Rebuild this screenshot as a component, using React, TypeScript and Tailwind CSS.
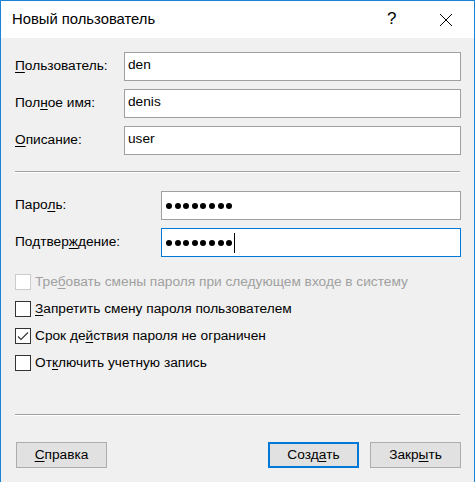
import React from "react";

const F = { fontFamily: '"Liberation Sans", Arial, sans-serif' };

function U({ children }: { children: React.ReactNode }) {
  return <span className="underline underline-offset-[2px] decoration-[1px]">{children}</span>;
}

function Field({ label, value, labelW, focused, password }: { label: React.ReactNode; value?: string; labelW: string; focused?: boolean; password?: boolean }) {
  return (
    <div className="flex items-center h-[29px]">
      <div className={`${labelW} shrink-0 text-[13.7px] text-black`}>{label}</div>
      <div className={`flex-1 h-[29px] bg-white border flex items-center pl-[3px] ${focused ? "border-[#0078d7]" : "border-[#a0a0a0]"}`}>
        {password ? (
          <div className="flex items-center pl-[1px]">
            <div className="flex gap-[2.6px]">
              {Array.from({ length: 8 }).map((_, i) => (
                <div key={i} className="w-[6px] h-[6px] rounded-full bg-black" />
              ))}
            </div>
            {focused && <div className="ml-[2px] w-[1px] h-[20px] bg-black" />}
          </div>
        ) : (
          <span className="text-[13.7px] text-black leading-none -mt-[3px]">{value}</span>
        )}
      </div>
    </div>
  );
}

function Check({ checked, disabled, children }: { checked?: boolean; disabled?: boolean; children: React.ReactNode }) {
  return (
    <div className="flex items-center h-[16px]">
      <div className={`w-[16px] h-[16px] border flex items-center justify-center ${disabled ? "border-[#cccccc] bg-white" : "border-[#333333] bg-white"}`}>
        {checked && (
          <svg width="14" height="14" viewBox="0 0 14 14">
            <path d="M2 7.5 L5 10.5 L12 3.5" fill="none" stroke="#333" strokeWidth="1.1" />
          </svg>
        )}
      </div>
      <span className={`ml-[4px] text-[13.7px] ${disabled ? "text-[#a0a0a0]" : "text-black"}`}>{children}</span>
    </div>
  );
}

function Btn({ children, def }: { children: React.ReactNode; def?: boolean }) {
  return (
    <div className={`w-[91px] h-[26px] bg-[#e1e1e1] flex items-center justify-center text-[13.7px] text-black ${def ? "border-2 border-[#0078d7]" : "border border-[#adadad]"}`}>
      {children}
    </div>
  );
}

export default function App() {
  return (
    <div style={F} className="w-[475px] h-[482px] border-t border-l border-r border-[#1883d7] bg-[#f0f0f0] flex flex-col overflow-hidden">
      <div className="h-[37px] bg-white flex items-center shrink-0 relative">
        <span className="ml-[11px] text-[14.8px] text-black">Новый пользователь</span>
        <span className="absolute left-[386px] top-[8px] text-[17px] leading-[20px] text-black">?</span>
        <svg className="absolute left-[438px] top-[12px]" width="14" height="14" viewBox="0 0 14 14">
          <path d="M1 1 L13 13 M13 1 L1 13" stroke="#000" strokeWidth="1" />
        </svg>
      </div>
      <div className="flex-1 pl-[14px] pr-[13px] flex flex-col">
        <div className="mt-[14px] flex flex-col gap-[8px]">
          <Field labelW="w-[109px]" label={<><U>П</U>ользователь:</>} value="den" />
          <Field labelW="w-[109px]" label={<>Пол<U>н</U>ое имя:</>} value="denis" />
          <Field labelW="w-[109px]" label={<><U>О</U>писание:</>} value="user" />
        </div>
        <div className="mt-[16px] mr-[1px] h-[1px] bg-[#a0a0a0] border-b border-white box-content" />
        <div className="mt-[18px] flex flex-col gap-[8px]">
          <Field labelW="w-[146px]" label={<>Паро<U>л</U>ь:</>} password />
          <Field labelW="w-[146px]" label={<>Подтвер<U>ж</U>дение:</>} password focused />
        </div>
        <div className="mt-[17px] flex flex-col gap-[11px]">
          <Check disabled>Тре<U>б</U>овать смены пароля при следующем входе в систему</Check>
          <Check><U>З</U>апретить смену пароля пользователем</Check>
          <Check checked>Срок де<U>й</U>ствия пароля не ограничен</Check>
          <Check>От<U>к</U>лючить учетную запись</Check>
        </div>
        <div className="mt-[43px] mr-[1px] h-[1px] bg-[#a0a0a0] border-b border-white box-content" />
        <div className="mt-[26px] flex items-center pl-[1px]">
          <Btn><U>С</U>правка</Btn>
          <div className="flex-1" />
          <Btn def>Созд<U>а</U>ть</Btn>
          <div className="w-[11px]" />
          <Btn>Закр<U>ы</U>ть</Btn>
        </div>
      </div>
    </div>
  );
}
